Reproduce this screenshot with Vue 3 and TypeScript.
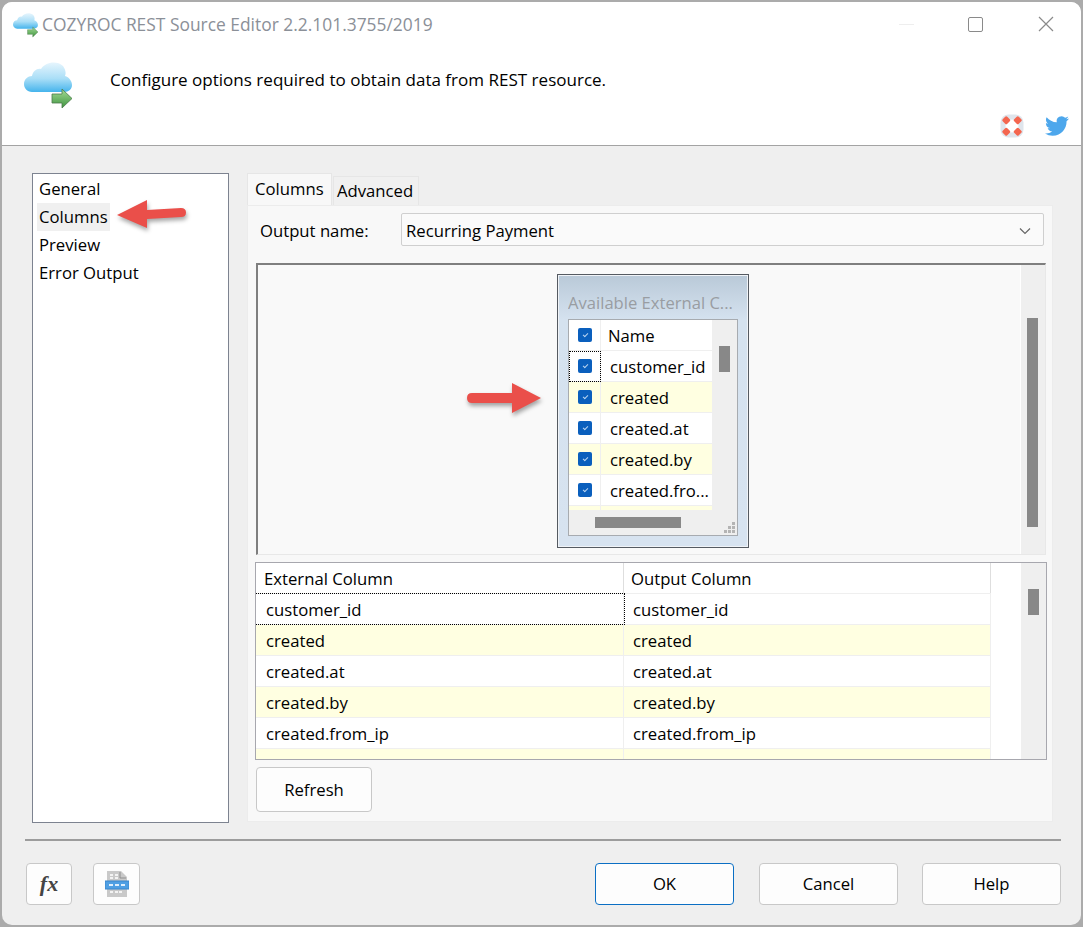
<template>
  <div class="window">
    <header class="header">
      <div class="titlebar">
        <svg class="app-icon" width="26" height="26" viewBox="0 0 50 48"><use href="#cloud" /></svg>
        <span class="title">COZYROC REST Source Editor 2.2.101.3755/2019</span>
        <span class="min"></span>
        <span class="max"></span>
        <svg class="close" width="16" height="16" viewBox="0 0 16 16">
          <path d="M1 1l14 14M15 1L1 15" stroke="#8a8a8a" stroke-width="1.2" fill="none" />
        </svg>
      </div>
      <div class="banner">
        <svg width="50" height="48" viewBox="0 0 50 48">
          <defs>
            <linearGradient id="cloudFill" x1="0" y1="0" x2="0" y2="1">
              <stop offset="0" stop-color="#e6f5fd" />
              <stop offset="0.55" stop-color="#a9def7" />
              <stop offset="1" stop-color="#45b4ec" />
            </linearGradient>
            <linearGradient id="arrowFill" x1="0" y1="0" x2="0" y2="1">
              <stop offset="0" stop-color="#a4dc95" />
              <stop offset="1" stop-color="#3f9440" />
            </linearGradient>
            <g id="cloud">
              <path
                d="M8 31C3 31 0 27 0 23C0 18 4 15 8 15C9 10 13 7 17 8C21 1 33 -1 39 5C42 9 42 13 41 15C45 16 48 20 48 24C48 28 45 31 40 31Z"
                fill="url(#cloudFill)"
              />
              <path d="M28 33h10v-5l10 9.500-10 9.500v-5h-10Z" fill="url(#arrowFill)" stroke="#4b7a4b" stroke-width="0.8" />
            </g>
          </defs>
          <use href="#cloud" />
        </svg>
        <p class="banner-text">Configure options required to obtain data from REST resource.</p>
        <div class="links">
          <svg width="24" height="24" viewBox="0 0 24 24">
            <rect x="0.500" y="0.500" width="23" height="23" rx="8" fill="#dfe5ec" />
            <circle cx="12" cy="12" r="6.500" fill="#fff" />
            <g fill="#f4664f">
              <rect x="3" y="3" width="6.500" height="6.500" rx="1.500" transform="rotate(45 6.250 6.250)" />
              <rect x="14.500" y="3" width="6.500" height="6.500" rx="1.500" transform="rotate(45 17.750 6.250)" />
              <rect x="3" y="14.500" width="6.500" height="6.500" rx="1.500" transform="rotate(45 6.250 17.750)" />
              <rect x="14.500" y="14.500" width="6.500" height="6.500" rx="1.500" transform="rotate(45 17.750 17.750)" />
            </g>
          </svg>
          <svg width="24" height="24" viewBox="0 0 24 24">
            <path
              fill="#4da7ec"
              d="M23.953 4.570a10 10 0 01-2.825.775 4.958 4.958 0 002.163-2.723c-.951.555-2.005.959-3.127 1.184a4.920 4.920 0 00-8.384 4.482C7.690 8.095 4.067 6.130 1.640 3.162a4.822 4.822 0 00-.666 2.475c0 1.710.870 3.213 2.188 4.096a4.904 4.904 0 01-2.228-.616v.060a4.923 4.923 0 003.946 4.827 4.996 4.996 0 01-2.212.085 4.936 4.936 0 004.604 3.417 9.867 9.867 0 01-6.102 2.105c-.390 0-.779-.023-1.170-.067a13.995 13.995 0 007.557 2.209c9.053 0 13.998-7.496 13.998-13.985 0-.210 0-.420-.015-.630A9.935 9.935 0 0024 4.590z"
            />
          </svg>
        </div>
      </div>
    </header>

    <main class="main">
      <ul class="nav">
        <li v-for="item in navItems" :key="item" :class="{ active: item === 'Columns' }">{{ item }}</li>
      </ul>

      <section class="tabs">
        <div class="tab-strip">
          <span class="tab current">Columns</span>
          <span class="tab">Advanced</span>
        </div>
        <div class="panel">
          <div class="output-row">
            <label>Output name:</label>
            <div class="select">
              <span>Recurring Payment</span>
              <svg width="12" height="8" viewBox="0 0 12 8">
                <path d="M1 1.500l5 5 5-5" stroke="#666" stroke-width="1.200" fill="none" />
              </svg>
            </div>
          </div>

          <div class="canvas">
            <div class="canvas-area">
              <div class="node">
                <div class="node-title">Available External C...</div>
                <div class="node-list">
                  <div class="node-main">
                    <div class="node-rows">
                      <div class="node-row header-row">
                        <span class="check-cell"><i class="check"></i></span>
                        <span class="node-name head">Name</span>
                      </div>
                      <div
                        v-for="(name, i) in nodeColumns"
                        :key="i"
                        class="node-row"
                        :class="{ alt: i % 2 === 1 }"
                      >
                        <span class="check-cell" :class="{ focus: i === 0 }"><i class="check"></i></span>
                        <span class="node-name">{{ name }}</span>
                      </div>
                    </div>
                    <div class="vbar small"><span class="thumb"></span></div>
                  </div>
                  <div class="hbar">
                    <span class="hthumb"></span>
                    <svg class="grip" width="12" height="12" viewBox="0 0 12 12" fill="#b4b4b4">
                      <rect x="8" y="0" width="3" height="3" />
                      <rect x="4" y="4" width="3" height="3" />
                      <rect x="8" y="4" width="3" height="3" />
                      <rect x="0" y="8" width="3" height="3" />
                      <rect x="4" y="8" width="3" height="3" />
                      <rect x="8" y="8" width="3" height="3" />
                    </svg>
                  </div>
                </div>
              </div>
            </div>
            <div class="vbar tall"><span class="thumb"></span></div>
          </div>

          <div class="grid">
            <div class="grid-body">
              <div class="grid-row grid-head">
                <span class="cell">External Column</span>
                <span class="cell">Output Column</span>
              </div>
              <div
                v-for="(name, i) in gridColumns"
                :key="i"
                class="grid-row"
                :class="{ alt: i % 2 === 1 }"
              >
                <span class="cell" :class="{ focus: i === 0 }">{{ name }}</span>
                <span class="cell">{{ name }}</span>
              </div>
            </div>
            <div class="vbar grid-bar"><span class="thumb"></span></div>
          </div>

          <button class="btn refresh">Refresh</button>
        </div>
      </section>
    </main>

    <footer class="footer">
      <div class="footer-row">
        <button class="btn icon-btn fx"><span>fx</span></button>
        <button class="btn icon-btn doc">
          <svg width="24" height="26" viewBox="0 0 24 26">
            <path d="M2 0h14l6 6v20H2Z" fill="#c9c9c9" />
            <path d="M15 1v6h6" fill="none" stroke="#8f8f8f" />
            <path d="M5 4h3M10 4h3M5 7h3M10 7h3M5 21h3M10 21h3M14 21h3" stroke="#f3f3f3" stroke-width="2" />
            <rect x="0" y="10" width="24" height="8" fill="#4f9fe3" stroke="#3a86cc" />
            <path d="M4 14h4M10 14h4M16 14h4" stroke="#dfeefb" stroke-width="2" />
          </svg>
        </button>
        <div class="spacer"></div>
        <button class="btn action primary">OK</button>
        <button class="btn action">Cancel</button>
        <button class="btn action last">Help</button>
      </div>
    </footer>

    <svg class="arrow arrow-nav" width="84" height="42" viewBox="0 0 84 42">
      <path d="M4 20 L34 5 L34 15 L68 13 Q73 13 73 17.500 Q73 22 68 22 L34 24 L34 33Z" />
    </svg>
    <svg class="arrow arrow-canvas" width="86" height="44" viewBox="0 0 86 44">
      <path d="M78 20 L49 5 L49 15 L9 15 Q4 15 4 20 Q4 25 9 25 L49 25 L49 35Z" />
    </svg>
  </div>
</template>

<script setup lang="ts">
const navItems: string[] = ["General", "Columns", "Preview", "Error Output"];

const nodeColumns: string[] = [
  "customer_id",
  "created",
  "created.at",
  "created.by",
  "created.fro...",
  "",
];

const gridColumns: string[] = [
  "customer_id",
  "created",
  "created.at",
  "created.by",
  "created.from_ip",
  "created.loaned",
];
</script>

<style>
html,
body {
  margin: 0;
  background: #ababab;
}
</style>

<style scoped>
* {
  box-sizing: border-box;
}

.window {
  position: relative;
  width: 1079px;
  height: 923px;
  margin: 2px 0 0 2px;
  border-radius: 10px;
  background: #efefef;
  overflow: hidden;
  display: flex;
  flex-direction: column;
  font-family: "Open Sans", "Noto Sans", sans-serif;
  font-size: 16.7px;
  color: #000;
}

.header {
  height: 144px;
  flex: none;
  background: #fff;
  border-bottom: 1px solid #a3a3a3;
}

.titlebar {
  height: 44px;
  display: flex;
  align-items: center;
  padding: 0 27px 0 11px;
}

.app-icon {
  margin-top: 2px;
}

.title {
  margin-left: 3px;
  margin-top: -1px;
  font-size: 17.4px;
  color: #8b9098;
  white-space: nowrap;
}

.min {
  width: 15px;
  height: 1px;
  margin-left: auto;
  margin-right: 54px;
  background: #eee;
}

.max {
  width: 15px;
  height: 15px;
  margin-right: 55px;
  border: 1.500px solid #8a8a8a;
  border-radius: 2px;
}

.banner {
  position: relative;
  height: 99px;
  display: flex;
  padding: 15px 0 0 22px;
}

.banner-text {
  margin: 7px 0 0 36px;
  font-size: 17.05px;
}

.links {
  position: absolute;
  right: 12px;
  bottom: 7px;
  display: flex;
  gap: 21px;
}

.main {
  flex: none;
  height: 677px;
  display: flex;
  gap: 18px;
  padding: 27px 0 0 30px;
}

.nav {
  width: 197px;
  height: 650px;
  margin: 0;
  padding: 1px 0 0 4px;
  list-style: none;
  background: #fff;
  border: 1px solid #7d8390;
}

.nav li {
  width: fit-content;
  height: 28px;
  line-height: 28px;
  padding: 0 2px;
}

.nav li.active {
  background: #f0f0f0;
}

.tabs {
  width: 806px;
  height: 649px;
  display: flex;
  flex-direction: column;
}

.tab-strip {
  height: 32px;
  flex: none;
  display: flex;
  align-items: flex-end;
}

.tab {
  width: 86px;
  height: 29px;
  line-height: 27px;
  padding: 0 0 0 3px;
  margin-left: 1px;
  background: #f0f0f0;
  border: 1px solid #e6e6e6;
  border-bottom: 0;
}

.tab.current {
  width: 85px;
  height: 32px;
  line-height: 30px;
  margin-left: 0;
  padding: 0 0 0 7px;
  background: #f8f8f8;
}

.panel {
  flex: 1;
  padding: 7px 6px 0 7px;
  background: #f8f8f8;
  border: 1px solid #ececec;
}

.output-row {
  height: 33px;
  display: flex;
  align-items: center;
}

.output-row label {
  width: 146px;
  padding: 2px 0 0 5px;
  white-space: nowrap;
}

.select {
  width: 643px;
  height: 33px;
  display: flex;
  align-items: center;
  justify-content: space-between;
  padding: 2px 12px 0 4px;
  background: #fafafa;
  border: 1px solid #cfcfcf;
  border-radius: 2px;
}

.canvas {
  width: 790px;
  height: 292px;
  margin-top: 17px;
  margin-left: 1px;
  display: flex;
  background: #f9f9f9;
  border-top: 2px solid #7f7f7f;
  border-left: 2px solid #7f7f7f;
  border-right: 1px solid #e8e8e8;
  border-bottom: 1px solid #e8e8e8;
}

.canvas-area {
  flex: 1;
  padding: 9px 0 0 299px;
}

.node {
  width: 192px;
  height: 274px;
  padding: 0 10px;
  background: linear-gradient(#b9c9d8, #d5e2ef 45px, #d7e3f0);
  border: 1px solid #555a61;
  outline: 1px solid #f0f3f7;
  outline-offset: -2px;
}

.node-title {
  height: 44px;
  line-height: 55px;
  color: #999da2;
  font-size: 16.6px;
  white-space: nowrap;
  overflow: hidden;
}

.node-list {
  width: 170px;
  height: 217px;
  display: flex;
  flex-direction: column;
  background: #efefef;
  border: 1px solid #a7abb0;
}

.node-main {
  flex: 1;
  min-height: 0;
  display: flex;
}

.node-rows {
  width: 143px;
  overflow: hidden;
  background: #fff;
}

.node-row {
  height: 31px;
  display: flex;
  align-items: center;
  background: #fff;
  border-bottom: 1px solid #efefef;
}

.node-row.alt {
  background: #ffffe1;
}

.check-cell {
  width: 32px;
  height: 31px;
  display: flex;
  align-items: center;
  justify-content: center;
  border-right: 1px solid #efefef;
}

.check-cell.focus {
  outline: 1px dotted #000;
  outline-offset: -1px;
}

.check {
  position: relative;
  display: block;
  width: 14px;
  height: 14px;
  border-radius: 2px;
  background: #0a5fbd;
}

.check::after {
  content: "";
  position: absolute;
  left: 5px;
  top: 5px;
  width: 4px;
  height: 2px;
  border-left: 1px solid #b9d4f0;
  border-bottom: 1px solid #b9d4f0;
  transform: rotate(-45deg);
}

.node-name {
  padding-left: 9px;
  white-space: nowrap;
}

.node-name.head {
  padding-left: 7px;
}

.vbar {
  position: relative;
  flex: none;
  background: #efefef;
}

.thumb {
  position: absolute;
  display: block;
  background: #888;
}

.vbar.small {
  width: 25px;
}

.vbar.small .thumb {
  left: 7px;
  top: 26px;
  width: 11px;
  height: 26px;
}

.vbar.tall {
  width: 25px;
  border-left: 1px solid #fff;
}

.vbar.tall .thumb {
  left: 6px;
  top: 53px;
  width: 11px;
  height: 209px;
}

.hbar {
  position: relative;
  height: 25px;
  flex: none;
}

.hthumb {
  position: absolute;
  left: 26px;
  top: 7px;
  width: 86px;
  height: 11px;
  background: #888;
}

.grip {
  position: absolute;
  right: 1px;
  bottom: 1px;
}

.grid {
  width: 792px;
  height: 198px;
  margin-top: 7px;
  display: flex;
  background: #fff;
  border: 1px solid #a7a7ae;
}

.grid-body {
  flex: 1;
  overflow: hidden;
}

.grid-row {
  height: 31px;
  width: 735px;
  display: grid;
  grid-template-columns: 368px 367px;
  background: #fff;
  border-bottom: 1px solid #efefef;
}

.grid-row.alt {
  background: #ffffe1;
}

.cell {
  height: 30px;
  line-height: 31px;
  padding-left: 10px;
  border-right: 1px solid #efefef;
  white-space: nowrap;
}

.cell + .cell {
  padding-left: 9px;
}

.grid-head .cell {
  padding-left: 8px;
  border-right-color: #dedede;
}

.grid-head .cell + .cell {
  padding-left: 7px;
}

.cell.focus {
  outline: 1px dotted #000;
  outline-offset: 0;
}

.vbar.grid-bar {
  width: 25px;
}

.vbar.grid-bar .thumb {
  left: 7px;
  top: 26px;
  width: 11px;
  height: 26px;
}

.btn {
  height: 45px;
  font: inherit;
  color: inherit;
  background: #fdfdfd;
  border: 1px solid #c8c8c8;
  border-radius: 4px;
  padding: 0;
}

.refresh {
  display: block;
  width: 116px;
  margin-top: 7px;
  margin-left: 1px;
}

.footer {
  flex: 1;
  margin: 16px 20px 0 23px;
  border-top: 2px solid #9c9c9c;
  border-bottom: 0;
}

.footer-row {
  height: 42px;
  margin-top: 22px;
  display: flex;
  align-items: stretch;
  padding-left: 1px;
}

.footer-row .btn {
  height: 42px;
}

.footer-row .action {
  padding-bottom: 2px;
}

.icon-btn {
  display: flex;
  align-items: center;
  justify-content: center;
}

.fx {
  width: 46px;
  font-family: "Liberation Serif", serif;
  font-size: 22px;
  font-style: italic;
  font-weight: 700;
  color: #444;
}

.doc {
  width: 47px;
  margin-left: 21px;
}

.spacer {
  flex: 1;
}

.action {
  width: 139px;
  margin-left: 25px;
}

.action.last {
  margin-left: 24px;
}

.action.primary {
  margin-left: 0;
  border-color: #0b6fc4;
}

.arrow {
  position: absolute;
  fill: #ea4f4a;
  filter: drop-shadow(1px 3px 2px rgba(0, 0, 0, 0.35));
}

.arrow-nav {
  left: 111px;
  top: 193px;
}

.arrow-canvas {
  left: 461px;
  top: 376px;
}
</style>
